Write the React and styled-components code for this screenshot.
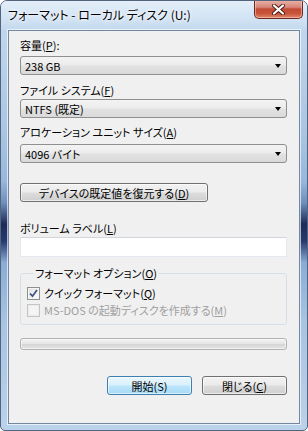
import React from 'react';
import styled, { createGlobalStyle } from 'styled-components';

const GlobalStyle = createGlobalStyle`
    html, body {
        margin: 0;
        padding: 0;
        background: #ffffff;
    }
    * {
        box-sizing: border-box;
    }
`;

const Window = styled.div`
    width: 308px;
    height: 431px;
    display: flex;
    flex-direction: column;
    border: 1px solid #52657d;
    border-radius: 7px 7px 5px 5px;
    background: linear-gradient(
        to bottom,
        #d6e5f4 0%,
        #c0d6ec 7%,
        #aac6e3 30%,
        #98b7dc 42%,
        #6f8fbd 47%,
        #1d2b5a 52%,
        #263a70 56%,
        #8aacd5 61%,
        #a8c4e3 75%,
        #bad2ea 100%
    );
    font-family: 'Noto Sans CJK JP', 'Noto Sans', sans-serif;
    font-feature-settings: 'palt';
    font-size: 11px;
    color: #000000;
    overflow: hidden;
`;

const TitleBar = styled.div`
    height: 29px;
    flex: none;
    display: flex;
    align-items: flex-start;
    justify-content: space-between;
    background: linear-gradient(to bottom, #e3eef9 0%, #d2e3f4 60%, #c3d9ee 100%);
`;

const Title = styled.span`
    padding: 6px 0 0 7px;
    font-size: 12px;
    line-height: 16px;
    color: #000000;
    text-shadow: 0 0 6px #ffffff, 0 0 3px #ffffff;
`;

const CloseBtn = styled.div`
    width: 49px;
    height: 19px;
    margin: -1px 4px 0 0;
    display: flex;
    align-items: center;
    justify-content: center;
    border: 1px solid #6b2a20;
    border-top: none;
    border-radius: 0 0 5px 5px;
    background: linear-gradient(
        to bottom,
        #eab5a8 0%,
        #d8867a 40%,
        #c24a36 50%,
        #c8553a 75%,
        #e1876a 100%
    );
    box-shadow: inset 0 0 0 1px rgba(255, 220, 210, 0.5);
`;

const Client = styled.div`
    flex: 1;
    margin: 0 7px 6px 7px;
    padding: 0 12px 0 11px;
    display: flex;
    flex-direction: column;
    background: #f0f0f0;
    border: 1px solid #75879e;
    box-shadow: 0 0 0 1px rgba(255, 255, 255, 0.65);
`;

const Label = styled.div`
    height: 14px;
    line-height: 14px;
    margin-top: ${(p) => p.$top}px;
    white-space: nowrap;
`;

const Key = styled.span`
    text-decoration: underline;
    text-underline-offset: 1px;
`;

const ComboBox = styled.div`
    height: 19px;
    margin-top: ${(p) => p.$top}px;
    display: flex;
    align-items: center;
    justify-content: space-between;
    padding: 0 4px 0 4px;
    border: 1px solid #8e8f8f;
    border-radius: 3px;
    background: linear-gradient(to bottom, #f3f3f3 0%, #ececec 48%, #e2e2e2 52%, #dadada 100%);
    line-height: 14px;
`;

const Arrow = styled.span`
    width: 0;
    height: 0;
    margin-right: 1px;
    border-left: 3.5px solid transparent;
    border-right: 3.5px solid transparent;
    border-top: 4px solid #000000;
`;

const PushButton = styled.div`
    width: ${(p) => p.$width}px;
    height: 19px;
    margin-top: ${(p) => p.$top || 0}px;
    display: flex;
    align-items: center;
    justify-content: center;
    border: 1px solid ${(p) => (p.$default ? '#3c7fb1' : '#707070')};
    border-radius: 3px;
    background: ${(p) =>
        p.$default
            ? 'linear-gradient(to bottom, #eaf6fd 0%, #d9f0fc 48%, #bee6fd 52%, #a7d9f5 100%)'
            : 'linear-gradient(to bottom, #f2f2f2 0%, #ebebeb 48%, #dddddd 52%, #cfcfcf 100%)'};
    box-shadow: inset 0 0 0 1px rgba(255, 255, 255, 0.6);
    line-height: 14px;
    white-space: nowrap;
`;

const TextInput = styled.div`
    height: 20px;
    margin-top: 2px;
    background: #ffffff;
    border: 1px solid #e3e9ef;
    border-top-color: #d2d6dc;
`;

const Group = styled.fieldset`
    margin: 9px 0 0 0;
    padding: 6px 0 7px 6px;
    border: 1px solid #d5dfe5;
    border-radius: 3px;
    display: flex;
    flex-direction: column;
    gap: 3px;
`;

const Legend = styled.legend`
    margin-left: 6px;
    padding: 0 2px;
    line-height: 14px;
`;

const CheckRow = styled.div`
    height: 14px;
    display: flex;
    align-items: center;
    gap: 4px;
    line-height: 14px;
    color: ${(p) => (p.$disabled ? '#a0a0a0' : '#000000')};
    white-space: nowrap;
`;

const CheckBox = styled.span`
    width: 13px;
    height: 13px;
    flex: none;
    display: flex;
    align-items: center;
    justify-content: center;
    border: 1px solid ${(p) => (p.$disabled ? '#c4c4c4' : '#8e8f8f')};
    background: ${(p) =>
        p.$disabled
            ? '#f4f4f4'
            : 'linear-gradient(135deg, #dcdcdc 0%, #f0f0f0 50%, #fcfcfc 100%)'};
    box-shadow: inset 0 0 0 1px ${(p) => (p.$disabled ? '#ececec' : '#f4f4f4')};
`;

const Progress = styled.div`
    height: 12px;
    margin-top: 13px;
    border: 1px solid #b2b2b2;
    border-radius: 3px;
    background: linear-gradient(to bottom, #f3f3f3 0%, #e6e6e6 45%, #d6d6d6 55%, #e4e4e4 100%);
    box-shadow: inset 0 0 0 1px rgba(255, 255, 255, 0.5);
`;

const ButtonRow = styled.div`
    margin-top: 26px;
    display: flex;
    justify-content: flex-end;
    gap: 10px;
`;

const CloseGlyph = () => (
    <svg width="13" height="11" viewBox="0 0 13 11">
        <path d="M2 1.5 L11 9.5 M11 1.5 L2 9.5" stroke="#4a1c14" strokeWidth="4" strokeLinecap="round" />
        <path d="M2 1.5 L11 9.5 M11 1.5 L2 9.5" stroke="#ffffff" strokeWidth="2.2" strokeLinecap="round" />
    </svg>
);

const CheckMark = () => (
    <svg width="9" height="9" viewBox="0 0 9 9">
        <path d="M1 4.5 L3.5 7.2 L8 1" fill="none" stroke="#3b5586" strokeWidth="1.8" />
    </svg>
);

const Combo = ({ value, top }) => (
    <ComboBox $top={top}>
        <span>{value}</span>
        <Arrow />
    </ComboBox>
);

const App = () => {
    return (
        <>
            <GlobalStyle />
            <Window>
                <TitleBar>
                    <Title>フォーマット - ローカル ディスク (U:)</Title>
                    <CloseBtn>
                        <CloseGlyph />
                    </CloseBtn>
                </TitleBar>
                <Client>
                    <Label $top={7}>
                        容量(<Key>P</Key>):
                    </Label>
                    <Combo value="238 GB" top={4} />
                    <Label $top={8}>
                        ファイル システム(<Key>F</Key>)
                    </Label>
                    <Combo value="NTFS (既定)" top={2} />
                    <Label $top={7}>
                        アロケーション ユニット サイズ(<Key>A</Key>)
                    </Label>
                    <Combo value="4096 バイト" top={5} />
                    <PushButton $width={188} $top={20}>
                        <span>
                            デバイスの既定値を復元する(<Key>D</Key>)
                        </span>
                    </PushButton>
                    <Label $top={19}>
                        ボリューム ラベル(<Key>L</Key>)
                    </Label>
                    <TextInput />
                    <Group>
                        <Legend>
                            フォーマット オプション(<Key>O</Key>)
                        </Legend>
                        <CheckRow>
                            <CheckBox>
                                <CheckMark />
                            </CheckBox>
                            <span>
                                クイック フォーマット(<Key>Q</Key>)
                            </span>
                        </CheckRow>
                        <CheckRow $disabled>
                            <CheckBox $disabled />
                            <span>
                                MS-DOS の起動ディスクを作成する(<Key>M</Key>)
                            </span>
                        </CheckRow>
                    </Group>
                    <Progress />
                    <ButtonRow>
                        <PushButton $width={85} $default>
                            <span>開始(S)</span>
                        </PushButton>
                        <PushButton $width={85}>
                            <span>
                                閉じる(<Key>C</Key>)
                            </span>
                        </PushButton>
                    </ButtonRow>
                </Client>
            </Window>
        </>
    );
};

export default App;
